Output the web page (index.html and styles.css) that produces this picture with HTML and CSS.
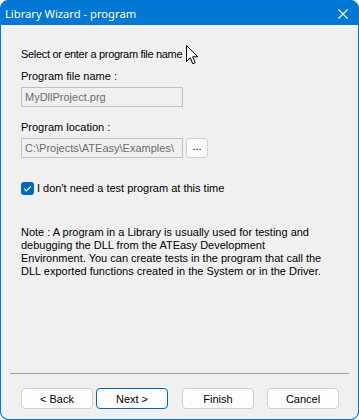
FILE: index.html
```html
<!DOCTYPE html>
<html>

<head>
    <title>Library Wizard - program</title>
    <meta name="viewport" content="width=device-width, initial-scale=1.0">
    <link rel="stylesheet" href="styles.css">
</head>

<body>
    <div class="window">
        <div class="titlebar">
            <span class="title">Library Wizard - program</span>
            <svg class="close" width="10" height="10" viewBox="0 0 10 10">
                <path d="M0.5 0.5 L9.5 9.5 M9.5 0.5 L0.5 9.5" stroke="#fff" stroke-width="1.1" fill="none"/>
            </svg>
        </div>

        <div class="client">
            <div class="content">
                <p class="intro">Select or enter a program file name</p>

                <label class="field-label">Program file name :</label>
                <input type="text" class="field" value="MyDllProject.prg" disabled>

                <label class="field-label location-label">Program location :</label>
                <div class="location-row">
                    <input type="text" class="field" value="C:\Projects\ATEasy\Examples\" disabled>
                    <button class="browse" type="button">...</button>
                </div>

                <div class="check-row">
                    <span class="checkbox">
                        <svg width="13" height="13" viewBox="0 0 13 13">
                            <path d="M3.2 6.7 L5.4 8.9 L9.8 4.3" stroke="#fff" stroke-width="1.2" fill="none"/>
                        </svg>
                    </span>
                    <span>I don't need a test program at this time</span>
                </div>

                <p class="note">Note : A program in a Library is usually used for testing and<br>debugging the DLL from the ATEasy Development<br>Environment. You can create tests in the program that call the<br>DLL exported functions created in the System or in the Driver.</p>
            </div>

            <div class="footer">
                <div class="separator"></div>
                <div class="buttons">
                    <button type="button" class="btn">&lt; Back</button>
                    <button type="button" class="btn default">Next &gt;</button>
                    <button type="button" class="btn finish">Finish</button>
                    <button type="button" class="btn cancel">Cancel</button>
                </div>
            </div>
        </div>

        <!-- mouse pointer -->
        <svg class="cursor" width="13" height="20" viewBox="0 0 13 20">
            <path d="M0.5 0.5 L0.5 16.5 L4.3 12.8 L6.8 18.8 L9.2 17.8 L6.7 11.8 L11.8 11.8 Z" fill="#fff" stroke="#000" stroke-width="1"/>
        </svg>
    </div>
</body>
</html>
```

FILE: styles.css
```css
html,
body {
    margin: 0;
    padding: 0;
    background-color: #ffffff;
}

body {
    width: 359px;
    height: 420px;
    overflow: hidden;
}

.window {
    position: relative;
    box-sizing: border-box;
    width: 359px;
    height: 420px;
    background-color: #0078d4;
    border: 1px solid #0078d4;
    border-radius: 8px;
    display: flex;
    flex-direction: column;
    overflow: hidden;
}

.titlebar {
    height: 24px;
    display: flex;
    align-items: center;
    justify-content: space-between;
    padding: 0 10px 0 4px;
    color: #ffffff;
    font-family: "Noto Sans", sans-serif;
    font-size: 11.2px;
}

.title {
    margin-top: 1px;
}

.close {
    margin-top: 1px;
}

.client {
    flex: 1;
    background-color: #f0f0f0;
    display: flex;
    flex-direction: column;
    border-radius: 0 0 7px 7px;
    font-family: "Liberation Sans", Arial, sans-serif;
    font-size: 11px;
    line-height: 13px;
    color: #000000;
}

.content {
    padding: 23px 20px 0 20px;
    display: flex;
    flex-direction: column;
}

.intro {
    margin: 0;
    letter-spacing: -0.32px;
}

.field-label {
    display: block;
    margin-top: 9px;
}

.location-label {
    margin-top: 14px;
}

.field {
    box-sizing: border-box;
    width: 162px;
    height: 20px;
    margin: 4px 0 0 0;
    padding: 0 3px;
    border: 1px solid #c2c2c2;
    background-color: #f0f0f0;
    color: #6d6d6d;
    font-family: "Liberation Sans", Arial, sans-serif;
    font-size: 11px;
    outline: none;
}

.location-row {
    display: flex;
    align-items: flex-end;
    gap: 3px;
}

.browse {
    box-sizing: border-box;
    width: 22px;
    height: 20px;
    padding: 0 0 4px 0;
    border: 1px solid #d3d3d3;
    border-radius: 3px;
    background-color: #fbfbfb;
    color: #000000;
    font-family: "Liberation Sans", Arial, sans-serif;
    font-size: 11px;
    line-height: 14px;
}

.check-row {
    display: flex;
    align-items: center;
    gap: 3px;
    margin-top: 24px;
    height: 13px;
}

.checkbox {
    display: flex;
    width: 13px;
    height: 13px;
    border-radius: 3px;
    background-color: #0067c0;
}

.note {
    margin: 31px 0 0 0;
    white-space: nowrap;
}

.footer {
    margin-top: auto;
    padding: 0 9px 10px 9px;
}

.separator {
    height: 1px;
    background-color: #a0a0a0;
}

.buttons {
    display: flex;
    padding: 14px 0 0 11px;
}

.btn {
    box-sizing: border-box;
    width: 72px;
    height: 21px;
    padding: 0;
    border: 1px solid #d0d0d0;
    border-radius: 4px;
    background-color: #fdfdfd;
    color: #000000;
    font-family: "Liberation Sans", Arial, sans-serif;
    font-size: 11px;
}

.default {
    margin-left: 3px;
    border-color: #0067c0;
}

.finish {
    margin-left: 14px;
}

.cancel {
    margin-left: 13px;
}

.cursor {
    position: absolute;
    left: 185px;
    top: 44px;
}
```
